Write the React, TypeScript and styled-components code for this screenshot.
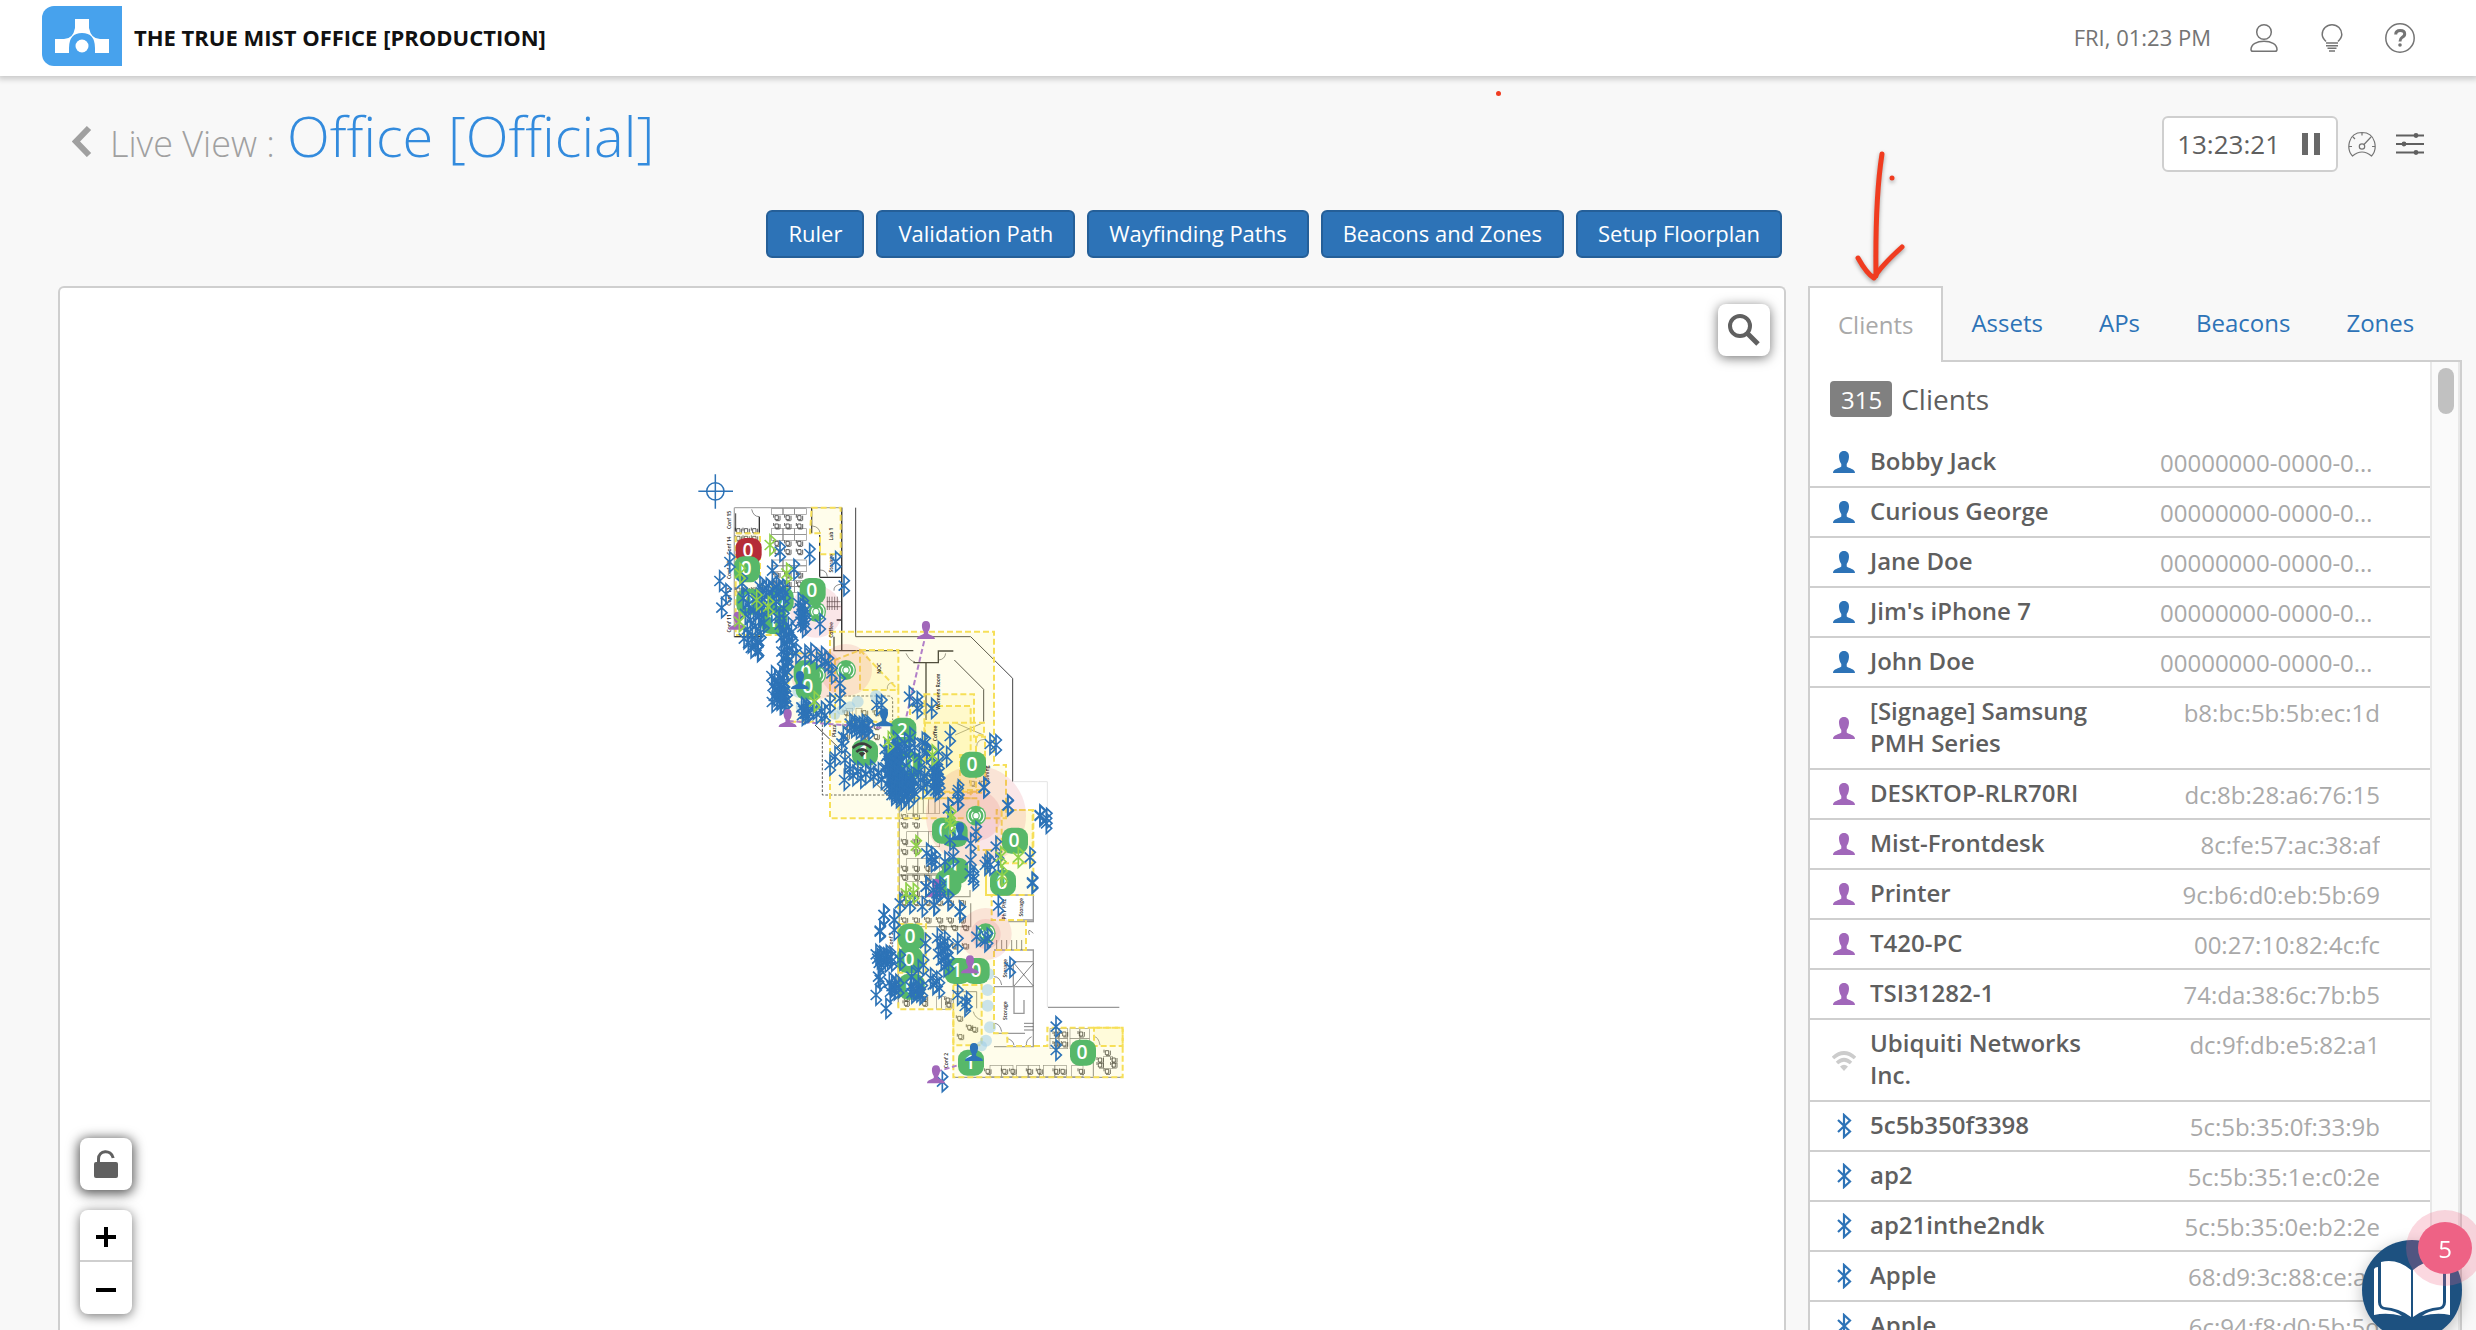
import React, { useState } from "react";
import styled, { createGlobalStyle, css } from "styled-components";

const color = {
  page: "#f8f8f8",
  line: "#cfcfcf",
  blue: "#2d73b7",
  blueDark: "#255f98",
  title: "#338bdd",
  text: "#5f5f5f",
  muted: "#a9a9a9",
  purple: "#a167ba",
  green: "#57b869",
  lime: "#8fd14a",
  red: "#b52c38",
  ink: "#f03c20",
};

const GlobalStyle = createGlobalStyle`
  *, *::before, *::after { box-sizing: border-box; }
  html, body, #root { height: 100%; }
  body {
    margin: 0;
    overflow: hidden;
    background: ${color.page};
    color: ${color.text};
    font-family: "Open Sans", "Noto Sans", sans-serif;
    font-size: 24px;
    line-height: 32px;
  }
  button { font: inherit; color: inherit; border: 0; padding: 0; background: none; cursor: pointer; }
  svg { display: block; }
`;

const Page = styled.div`
  position: relative;
  display: flex;
  flex-direction: column;
  height: 100vh;
  overflow: hidden;
`;

/* ---------- top bar ---------- */

const TopBar = styled.header`
  display: flex;
  align-items: center;
  flex: none;
  height: 76px;
  padding: 0 61px 0 42px;
  background: #fff;
  box-shadow: 0 1px 6px 2px rgba(0, 0, 0, 0.2);
`;

const Logo = styled.div`
  flex: none;
  width: 80px;
  height: 60px;
  margin-bottom: 4px;
  background: #47a2ed;
  border-radius: 12px 0 0 12px;
`;

const OrgName = styled.div`
  margin-left: 12px;
  padding-bottom: 2px;
  color: #111;
  font-size: 22px;
  font-weight: 700;
`;

const TopActions = styled.div`
  display: flex;
  align-items: center;
  gap: 38px;
  margin-left: auto;
  color: #747474;
  font-size: 22px;
`;

const DateText = styled.time`
  padding-bottom: 2px;
`;

const IconButton = styled.button`
  display: grid;
  place-items: center;
  min-width: 30px;
  height: 30px;
  color: #747474;
`;

/* ---------- heading ---------- */

const Heading = styled.div`
  display: flex;
  justify-content: space-between;
  align-items: flex-start;
  flex: none;
  height: 134px;
  padding: 19px 51px 0 72px;
`;

const TitleGroup = styled.div`
  display: flex;
  align-items: baseline;
  font-weight: 300;
  line-height: 80px;
`;

const BackButton = styled.button`
  width: 20px;
  height: 32px;
  margin-right: 18px;
  color: #a0a0a0;
`;

const Crumb = styled.span`
  color: #a0a0a0;
  font-size: 36px;
`;

const Title = styled.h1`
  margin: 0 0 0 12px;
  color: ${color.title};
  font-size: 56px;
  font-weight: 300;
`;

const TimeTools = styled.div`
  display: flex;
  align-items: center;
  gap: 9px;
  padding-top: 21px;
`;

const ViewTools = styled.div`
  display: flex;
  gap: 18px;
`;

const Clock = styled.div`
  display: flex;
  align-items: center;
  gap: 22px;
  height: 56px;
  padding: 0 16px 0 13px;
  border: 2px solid ${color.line};
  border-radius: 6px;
  background: #fff;
  font-size: 26px;
`;

const PauseButton = styled.button`
  display: flex;
  gap: 6px;

  &::before,
  &::after {
    content: "";
    width: 6px;
    height: 22px;
    background: #686868;
  }
`;

/* ---------- work area ---------- */

const WorkArea = styled.main`
  display: grid;
  grid-template-columns: minmax(0, 1fr) 654px;
  gap: 22px;
  flex: 1;
  min-height: 0;
  padding: 0 14px 0 58px;
`;

const MapColumn = styled.section`
  display: flex;
  flex-direction: column;
  min-height: 0;
`;

const Toolbar = styled.div`
  display: flex;
  justify-content: flex-end;
  gap: 12px;
  padding: 0 4px 28px;
`;

const ToolButton = styled.button`
  height: 48px;
  padding: 0 20px 2px;
  border: 2px solid ${color.blueDark};
  border-radius: 6px;
  background: ${color.blue};
  color: #fff;
  font-size: 22px;
  line-height: 30px;
`;

const MapPanel = styled.div`
  position: relative;
  display: flex;
  justify-content: center;
  flex: 1;
  min-height: 0;
  padding-top: 172px;
  overflow: hidden;
  border: 2px solid ${color.line};
  border-bottom: 0;
  border-radius: 6px 6px 0 0;
  background: #fff;
`;

const FloatingControls = styled.div<{ $corner: "top" | "bottom" }>`
  position: absolute;
  display: flex;
  flex-direction: column;
  gap: 20px;
  ${(p) => (p.$corner === "top" ? css`top: 16px; right: 14px;` : css`bottom: 16px; left: 20px;`)}
`;

const MapButton = styled.button<{ $strong?: boolean }>`
  display: grid;
  place-items: center;
  width: 52px;
  height: 52px;
  border-radius: 8px;
  background: #fff;
  color: #606060;
  box-shadow: 0 2px ${(p) => (p.$strong ? "12px 2px rgba(0,0,0,.65)" : "12px rgba(0,0,0,.55)")};
`;

const ZoomGroup = styled.div`
  border-radius: 8px;
  background: #fff;
  box-shadow: 0 2px 12px rgba(0, 0, 0, 0.55);
`;

const ZoomButton = styled.button`
  display: grid;
  place-items: center;
  width: 52px;
  height: 52px;
  padding-top: 4px;
  color: #000;

  &:first-child {
    border-bottom: 2px solid ${color.line};
  }
`;

/* ---------- sidebar ---------- */

const Sidebar = styled.aside`
  position: relative;
  display: flex;
  flex-direction: column;
  min-height: 0;
  padding-top: 76px;
`;

const TabList = styled.div`
  display: flex;
  flex: none;
  height: 76px;
  border-bottom: 2px solid ${color.line};
`;

const Tab = styled.button<{ $active: boolean }>`
  height: 76px;
  padding: 0 28px 2px;
  color: ${color.blue};
  line-height: 32px;
  ${(p) =>
    p.$active &&
    css`
      padding-bottom: 0;
      border: 2px solid ${color.line};
      border-bottom: 0;
      background: #fff;
      color: ${color.muted};
    `}
`;

const TabPanel = styled.div`
  display: flex;
  flex: 1;
  min-height: 0;
  overflow: hidden;
  border: solid ${color.line};
  border-width: 0 2px;
  background: #fff;
`;

const ListArea = styled.div`
  flex: 1;
  min-width: 0;
`;

const Summary = styled.h2`
  display: flex;
  align-items: center;
  gap: 9px;
  height: 76px;
  margin: 0;
  padding: 0 20px 2px;
  font-size: 28px;
  font-weight: 400;
`;

const Count = styled.span`
  padding: 3px 10px 1px 11px;
  border-radius: 4px;
  background: #808080;
  color: #fff;
  font-size: 24px;
`;

const ClientTable = styled.table`
  width: 100%;
  table-layout: fixed;
  border-spacing: 0;
`;

const Cell = styled.td`
  padding: 8px 0;
  border-bottom: 2px solid ${color.line};
  vertical-align: top;
`;

const IconCell = styled(Cell)`
  width: 60px;
  vertical-align: middle;

  svg {
    margin: 0 auto 0 22px;
  }
`;

const NameCell = styled.th`
  width: 250px;
  padding: 7px 0 9px;
  border-bottom: 2px solid ${color.line};
  font-weight: 600;
  text-align: left;
  vertical-align: top;
`;

const MacCell = styled(Cell)`
  padding: 9px 50px 7px 40px;
  color: ${color.muted};
  text-align: right;
`;

const MacText = styled.div`
  overflow: hidden;
  text-overflow: ellipsis;
  white-space: nowrap;
`;

const ScrollTrack = styled.div`
  flex: none;
  width: 30px;
  padding: 6px;
  border: solid #e8e8e8;
  border-width: 0 2px;
  background: #fafafa;
`;

const ScrollThumb = styled.div`
  width: 16px;
  height: 46px;
  border-radius: 8px;
  background: #c1c1c1;
`;

/* ---------- overlays ---------- */

const TabPointer = styled.svg`
  position: absolute;
  top: -61px;
  left: 40px;
  pointer-events: none;
  filter: drop-shadow(0 2px 2px rgba(0, 0, 0, 0.35));
`;

const InkDot = styled.span`
  position: absolute;
  top: 91px;
  left: 60.4%;
  width: 5px;
  height: 5px;
  border-radius: 50%;
  background: ${color.ink};
`;

const GuideButton = styled.button`
  position: fixed;
  right: 14px;
  bottom: -10px;
  width: 100px;
  height: 100px;
  border-radius: 50%;
  background: #1d5180;
  box-shadow: 0 4px 16px rgba(0, 0, 0, 0.25);
`;

const GuideBadge = styled.span`
  position: absolute;
  top: -18px;
  right: -10px;
  width: 54px;
  height: 52px;
  border-radius: 50%;
  background: #ee6285;
  box-shadow: 0 0 0 12px rgba(238, 98, 133, 0.25);
  color: #fff;
  line-height: 54px;
`;

/* ---------- icons ---------- */

const BT_PATH = "M1 6 L13 17.5 L7 23 V1 L13 6.5 L1 18";
const PERSON_PATH =
  "M11 0 C14.500 0 16.200 2.400 16 6 C15.800 9.500 14.700 11.500 13.700 13 V15.500 C16 17.500 22 17.800 22 22 H0 C0 17.800 6 17.500 8.300 15.500 V13 C7.300 11.500 6.200 9.500 6 6 C5.800 2.400 7.500 0 11 0Z";

type Kind = "named" | "wifi" | "guest" | "ble";

function KindIcon({ kind }: { kind: Kind }) {
  if (kind === "ble")
    return (
      <svg width="24" height="26" viewBox="-5 -1 24 26" fill="none" stroke={color.blue} strokeWidth="2.200">
        <path d={BT_PATH} />
      </svg>
    );
  if (kind === "wifi")
    return (
      <svg width="24" height="22" viewBox="0 -1 24 22" fill="none" stroke="#ccc" strokeWidth="3.600">
        <path d="M1 8 Q12 -2 23 8" />
        <path d="M5 13 Q12 6.500 19 13" />
        <path d="M12 21 L8 16.500 Q12 13 16 16.500Z" fill="#ccc" stroke="none" />
      </svg>
    );
  return (
    <svg width="24" height="22" viewBox="-1 0 24 22" fill={kind === "named" ? color.blue : color.purple}>
      <path d={PERSON_PATH} />
    </svg>
  );
}

/* ---------- floor map ---------- */

type Pt = [number, number];

const at = (ox: number, oy: number, pts: Pt[]): Pt[] => pts.map(([x, y]) => [x + ox, y + oy]);
const north = (pts: Pt[]) => at(0, 0, pts);
const centre = (pts: Pt[]) => at(360, 600, pts);
const south = (pts: Pt[]) => at(510, 1260, pts);

const cloud = (x0: number, y0: number, x1: number, y1: number, n: number): Pt[] =>
  Array.from({ length: n }, (_, i) => [
    x0 + ((i * 0.618034) % 1) * (x1 - x0),
    y0 + ((i + 0.5) / n) * (y1 - y0),
  ]);

const beacons: Pt[] = [
  ...north([
    [149, 306], [119, 363], [138, 402], [125, 443], [300, 275], [389, 282], [467, 305], [492, 377], [342, 328],
    [277, 332], [186, 370], [420, 492], [233, 575], [322, 590], [348, 580], [375, 585], [393, 580], [410, 595],
    [425, 590], [445, 610], [455, 640], [480, 670], [480, 715], [435, 605], [450, 730], [590, 735], [605, 735],
    [688, 710], [712, 725], [712, 745], [755, 745], [810, 828], [930, 852], [948, 855], [800, 890], [775, 875],
    [490, 830], [485, 850], [465, 890], [450, 915], [495, 900], [493, 960], [735, 850], [740, 880],
    [833, 1000], [835, 1020], [805, 1045], [912, 982], [983, 1035], [1080, 1065], [1100, 1075],
  ]),
  ...cloud(190, 410, 255, 550, 15), ...cloud(240, 378, 320, 400, 9), ...cloud(230, 410, 325, 480, 7),
  ...cloud(300, 490, 340, 560, 9), ...cloud(355, 425, 378, 505, 10), ...cloud(205, 545, 240, 575, 4),
  ...cloud(305, 570, 328, 650, 8), ...cloud(275, 645, 315, 735, 15), ...cloud(302, 700, 324, 735, 6),
  ...cloud(365, 740, 388, 768, 6), ...cloud(400, 745, 440, 770, 4), ...cloud(510, 790, 570, 812, 10),
  ...cloud(510, 925, 610, 960, 9), ...cloud(615, 865, 665, 950, 20),
  ...cloud(640, 840, 695, 890, 7), ...cloud(625, 940, 705, 1000, 22), ...cloud(630, 985, 690, 1022, 10),
  ...cloud(715, 930, 745, 990, 5), ...cloud(757, 920, 780, 995, 13), ...cloud(690, 825, 750, 900, 5),
  ...centre([
    [445, 445], [475, 390], [474, 420], [552, 383], [624, 437], [720, 468], [739, 490], [528, 515], [588, 560],
    [690, 592], [697, 667], [595, 610], [562, 605], [570, 615], [555, 615], [395, 590], [380, 580], [405, 600],
    [395, 605], [435, 605], [450, 540], [460, 590], [512, 550], [512, 600], [520, 650], [510, 640], [378, 680],
    [420, 690], [410, 700], [445, 720], [403, 735], [367, 740], [300, 730], [330, 730], [480, 755], [595, 737],
    [252, 765], [283, 780], [240, 812],
  ]),
  ...south([
    [547, 10], [370, 0], [228, 20], [250, 30], [270, 20], [295, 60], [330, 95], [252, 75], [101, 105], [133, 120],
    [90, 155], [133, 150], [380, 170], [405, 185], [412, 175], [323, 190], [480, 262], [226, 190], [85, 290],
    [90, 300], [78, 345], [108, 385], [150, 240], [185, 290], [205, 270], [220, 255], [323, 345], [350, 365],
    [345, 378], [618, 440], [618, 510], [277, 605],
  ]),
  ...south(cloud(78, 222, 128, 250, 11)), ...south(cloud(118, 305, 150, 338, 6)),
  ...south(cloud(182, 318, 222, 345, 7)), ...south(cloud(262, 170, 298, 265, 10)),
  ...south(cloud(242, 290, 272, 328, 4)),
];

const limeBeacons: Pt[] = [
  ...north([[270, 255], [320, 340], [180, 340], [230, 420], [265, 440], [178, 485], [403, 725], [757, 885], [625, 845]]),
  ...centre([[348, 557], [452, 470], [602, 590], [655, 592], [606, 648], [318, 700], [340, 700], [450, 490]]),
];

const apMarkers: [number, number, string][] = [
  [201, 328, "0"], [208, 425, "0"], [302, 420, "0"], [398, 393, "0"], [282, 483, "1"], [380, 640, "0"],
  [386, 680, "0"], [670, 812, "2"], [555, 878, "1"], [688, 915, "0"], [879, 914, "0"], [1005, 1142, "0"],
  [969, 1268, "0"], [795, 1112, "0"], [824, 1122, "0"], [826, 1232, "1"], [805, 1268, "1"], [693, 1430, "0"],
  [690, 1500, "0"], [695, 1580, "0"], [833, 1533, "1"], [890, 1533, "0"], [873, 1808, "1"], [1209, 1778, "0"],
];

const rings: Pt[] = [[408, 455], [408, 645], [498, 630], [888, 1067], [917, 1420]];

const halos: [number, number, number][] = [
  [408, 455, 78], [498, 630, 78], [410, 640, 78], [888, 1067, 150], [888, 1067, 76], [917, 1422, 78], [917, 1422, 45],
];

const trail: [number, number, number][] = [
  [355, 695, 18], [365, 740, 18], [533, 725, 18], [588, 708, 18], [510, 740, 16], [485, 750, 15], [465, 765, 15],
  [690, 865, 18], [700, 890, 16], [755, 990, 20], [925, 1542, 18], [923, 1590, 18], [923, 1637, 18],
  [930, 1702, 18], [918, 1742, 18], [905, 1758, 16],
];

const zones = [
  "395,143 482,143 482,283 420,283 420,220 390,220",
  "167,220 240,220 240,525 167,525",
  "240,380 320,380 320,525 240,525",
  "325,580 450,580 450,785 325,785",
  "450,515 942,515 942,915 978,915 978,1075 450,1075",
  "540,570 655,570 655,690 540,690",
  "465,600 540,570 655,690 655,785 465,785",
  "733,703 882,703 882,830 915,830 915,998 733,998",
  "690,738 872,738 872,1015 690,1015",
  "735,788 912,788 912,826 888,826 888,995 735,995",
  "840,885 915,885 915,990 840,990",
  "658,1015 895,1015 895,1170 918,1170 918,1305 1060,1305 1060,1050 950,1050 950,1170 918,1170 918,1305 935,1305 935,1380 1038,1380 1038,1470 942,1470 942,1720 982,1720 982,1758 1102,1758 1102,1703 1328,1703 1328,1852 820,1852 820,1648 655,1648 655,1015",
  "965,1050 1058,1050 1058,1210 965,1210",
  "655,1392 738,1392 738,1538 655,1538",
  "820,1575 905,1575 905,1756 820,1756",
  "1242,1703 1328,1703 1328,1758 1242,1758",
];

const walls: { d: string; c: string; w: number; dash?: string }[] = [
  { d: "M163 143H485V572M163 143V530H240", c: "#aaa", w: 4 },
  { d: "M485 143V572M163 530H250M460 572H700M462 530V572H485M238 170V220M419 225V350M419 352H485M395 143V220M470 480H485M738 608V780M700 608H775V573H820", c: "#333", w: 4 },
  { d: "M527 143V530H872L998 655V965M823 600L911 688V785M405 795L660 1040M167 160V215", c: "#444", w: 3 },
  { d: "M427 780V1005H655M440 708H625Q638 708 638 722V780", c: "#555", w: 3, dash: "8 5" },
  { d: "M998 965H1102V1642", c: "#e4e4e4", w: 3 },
  { d: "M1104 1642H1318M658 1015V1400M655 1400V1640M658 1075H740M658 1245H872M658 1310H870V1290M658 1400H872V1330M940 1305H1060V1385H985M1022 1380H1060M942 1470H1060V1760H942M942 1580H1060M1000 1505H1060V1580M1000 1505V1580M1002 1580V1660H1032V1620M942 1720H1035M820 1852H1328", c: "#999", w: 4 },
  { d: "M442 410V450M448 410V450M456 410V450M464 410V450M472 410V450M440 425H482M440 440H482M1002 1510L1060 1578M1060 1510L1002 1578M825 788L910 825M910 788L825 825M658 1015H820M700 1015V1070M730 1015V1060M765 1015V1060M820 1595H890V1645M820 1595V1652M1240 1760V1850M950 1440V1470M965 1440V1470M980 1440V1470M995 1440V1470M1010 1440V1470M1025 1440V1470M1032 1690H1060M1032 1700H1060M1032 1710H1060", c: "#444", w: 2 },
  { d: "M215 148Q220 170 238 170M420 220Q418 200 397 198M442 350Q440 330 420 330M462 392Q460 375 485 372M678 580Q690 605 705 605M797 580Q795 598 776 600M640 668Q620 668 622 688M890 860Q890 840 912 838M1048 1425Q1040 1400 1060 1420M942 1550Q960 1550 965 1575M942 1690Q960 1690 965 1715M1040 1760Q1035 1740 1055 1730M980 1735Q1000 1740 1002 1756M880 1655Q885 1675 905 1680M1242 1730Q1255 1730 1260 1755", c: "#555", w: 2 },
];

const grid = (xs: number[], ys: number[]): Pt[] => ys.flatMap((y) => xs.map((x): Pt => [x, y]));

const chairs: Pt[] = [
  ...grid([292, 325, 360], [173, 198, 250, 275, 345, 372]),
  ...grid([177, 200, 225], [212, 235, 390]),
  ...grid([500, 555, 590], [758, 800, 830]),
  ...grid([675, 710], [1070, 1095, 1145, 1175, 1225, 1252, 1300]),
  ...grid([745, 795, 830], [1225, 1252]),
  ...grid([675, 710, 745, 780, 812, 848], [1328, 1380]),
  ...grid([790, 825, 858], [1403, 1458]), ...grid([680, 735], [1630, 1615]),
  [840, 1675], [870, 1702], [843, 1730], [885, 1708], [805, 1620], [808, 1635],
  ...grid([925, 975, 1000, 1050, 1080, 1130, 1150, 1205], [1834]), ...grid([1130, 1155, 1205], [1722, 1752]),
  ...grid([1262, 1303], [1800, 1815]), ...grid([1283], [1778, 1834]), ...grid([880, 910], [925, 970]),
];

const desks: [number, number, number, number][] = [
  ...grid([274, 307, 343], [146, 206, 224, 300, 318, 362, 380]).map(([x, y]): [number, number, number, number] => [x, y, 36, 17]),
  ...grid([680, 712, 745], [1015, 1115, 1195, 1265]).map(([x, y]): [number, number, number, number] => [x, y, 34, 45]),
  ...grid([930, 965, 1010, 1045, 1090, 1125, 1175], [1816]).map(([x, y]): [number, number, number, number] => [x, y, 34, 34]),
  ...grid([1110, 1135, 1170, 1200], [1706, 1736]).map(([x, y]): [number, number, number, number] => [x, y, 28, 30]),
  [770, 1610, 14, 38], [784, 1610, 14, 38], [500, 745, 18, 40], [528, 745, 18, 60], [1270, 1790, 28, 35],
];

const rooms: [number, number, string][] = [
  [152, 180, "Conf 15"], [152, 257, "Conf 14"], [152, 330, "Conf 13"], [152, 410, "Conf 12"], [152, 490, "Conf 11"],
  [458, 222, "Lab 1"], [458, 310, "Storage"], [458, 510, "Coffee"], [602, 625, "NOC"], [781, 695, "Womens Room"],
  [468, 812, "Plaza"], [770, 820, "Coffee"], [928, 940, "Dining"], [1030, 1342, "Storage"], [978, 1330, "Ph2"],
  [978, 1365, "Ph1"], [980, 1525, "Storage"], [980, 1652, "Storage"], [640, 1440, "Conf 3"], [805, 1802, "Conf 2"],
];

const MapText = styled.text`
  font-family: "Open Sans", sans-serif;
  font-weight: 600;
  text-anchor: middle;
`;

function Person({ x, y, fill }: { x: number; y: number; fill: string }) {
  return <path d={PERSON_PATH} fill={fill} transform={`translate(${x - 27} ${y - 27}) scale(2.450)`} />;
}

function FloorMap() {
  return (
    <svg width="460" height="650" viewBox="36 0 1380 1950" role="img" aria-label="Office floor plan with live devices">
      <g fill="none">
        {walls.map((w, i) => (
          <path key={i} d={w.d} stroke={w.c} strokeWidth={w.w} strokeDasharray={w.dash} />
        ))}
        {desks.map(([x, y, w, h], i) => (
          <rect key={i} x={x} y={y} width={w} height={h} stroke="#888" strokeWidth="2" />
        ))}
        {chairs.map(([x, y], i) => (
          <path
            key={i}
            d={`M${x - 7} ${y - 6}h10v12h-10zM${x - 11} ${y - 9}v9M${x + 8} ${y - 6}v14M${x - 5} ${y + 9}h12`}
            stroke="#222"
            strokeWidth="2.200"
          />
        ))}
      </g>
      <g fill="#fff27a" fillOpacity="0.15" stroke="#f6df58" strokeWidth="6" strokeDasharray="18 9">
        {zones.map((z) => (
          <polygon key={z} points={z} />
        ))}
      </g>
      {rooms.map(([x, y, name]) => (
        <MapText key={`${x}-${y}`} fontSize="15" fill="#222" transform={`translate(${x} ${y}) rotate(-90)`}>
          {name}
        </MapText>
      ))}
      {halos.map(([x, y, r], i) => (
        <circle key={i} cx={x} cy={y} r={r} fill="#dc4b5a" fillOpacity="0.14" />
      ))}
      {trail.map(([x, y, r], i) => (
        <circle key={i} cx={x} cy={y} r={r} fill="#9fcde8" fillOpacity="0.55" />
      ))}
      <path
        d="M738 520L672 800M325 783L610 804M770 1835L830 1817"
        stroke="#b27fc8"
        strokeWidth="6"
        strokeDasharray="16 8"
        fill="none"
      />
      {rings.map(([x, y]) => (
        <g key={`${x}-${y}`} fill="none" stroke="#fff" strokeWidth="3.500">
          <circle cx={x} cy={y} r="30" fill={color.green} stroke="none" />
          <circle cx={x} cy={y} r="6" fill="#fff" />
          <path d={`M${x - 8} ${y - 11}a14 14 0 0 0 0 22M${x + 8} ${y - 11}a14 14 0 0 1 0 22`} />
          <path d={`M${x - 14} ${y - 19}a23 23 0 0 0 0 38M${x + 14} ${y - 19}a23 23 0 0 1 0 38`} />
        </g>
      ))}
      <rect x="167" y="234" width="78" height="78" rx="28" fill={color.red} />
      <MapText x="204" y="291" fontSize="58" fill="#fff">0</MapText>
      {apMarkers.map(([x, y, n]) => (
        <g key={`${x}-${y}`}>
          <rect x={x - 39} y={y - 39} width="78" height="78" rx="28" fill={color.green} />
          <MapText x={x - 3} y={y + 18} fontSize="58" fill="#fff">{n}</MapText>
        </g>
      ))}
      <Person x={173} y={482} fill={color.purple} />
      <Person x={768} y={1283} fill={color.purple} />
      <g fill="none" stroke={color.blue} strokeWidth="5">
        {beacons.map(([x, y], i) => (
          <path key={i} d={`M${x - 16} ${y - 15}l32 30l-16 15v-60l16 15l-32 30`} />
        ))}
      </g>
      <g fill="none" stroke={color.lime} strokeWidth="5">
        {limeBeacons.map(([x, y], i) => (
          <path key={i} d={`M${x - 16} ${y - 15}l32 30l-16 15v-60l16 15l-32 30`} />
        ))}
      </g>
      <Person x={738} y={510} fill={color.purple} />
      <Person x={323} y={774} fill={color.purple} />
      <Person x={870} y={1513} fill={color.purple} />
      <Person x={768} y={1843} fill={color.purple} />
      <Person x={360} y={660} fill={color.blue} />
      <Person x={612} y={772} fill={color.blue} />
      <Person x={840} y={1114} fill={color.blue} />
      <Person x={882} y={1776} fill={color.blue} />
      <g fill="none" stroke="#3d3d3d" strokeWidth="8">
        <path d="M518 864Q546 838 574 864" />
        <path d="M529 876Q546 860 563 876" />
        <path d="M546 891L536 880Q546 872 556 880Z" fill="#3d3d3d" stroke="none" />
      </g>
      <g fill="none" stroke={color.blue} strokeWidth="4.500">
        <circle cx="106" cy="94" r="26" />
        <path d="M106 43V146M55 94H159" />
      </g>
    </svg>
  );
}

/* ---------- data ---------- */

const tools = ["Ruler", "Validation Path", "Wayfinding Paths", "Beacons and Zones", "Setup Floorplan"];
const tabs = ["Clients", "Assets", "APs", "Beacons", "Zones"];
const anonymous = "00000000-0000-0000-0000-000000000000";

const clients: [Kind, string, string][] = [
  ["named", "Bobby Jack", anonymous],
  ["named", "Curious George", anonymous],
  ["named", "Jane Doe", anonymous],
  ["named", "Jim's iPhone 7", anonymous],
  ["named", "John Doe", anonymous],
  ["guest", "[Signage] Samsung PMH Series", "b8:bc:5b:5b:ec:1d"],
  ["guest", "DESKTOP-RLR70RI", "dc:8b:28:a6:76:15"],
  ["guest", "Mist-Frontdesk", "8c:fe:57:ac:38:af"],
  ["guest", "Printer", "9c:b6:d0:eb:5b:69"],
  ["guest", "T420-PC", "00:27:10:82:4c:fc"],
  ["guest", "TSI31282-1", "74:da:38:6c:7b:b5"],
  ["wifi", "Ubiquiti Networks Inc.", "dc:9f:db:e5:82:a1"],
  ["ble", "5c5b350f3398", "5c:5b:35:0f:33:9b"],
  ["ble", "ap2", "5c:5b:35:1e:c0:2e"],
  ["ble", "ap21inthe2ndk", "5c:5b:35:0e:b2:2e"],
  ["ble", "Apple", "68:d9:3c:88:ce:a4"],
  ["ble", "Apple", "6c:94:f8:d0:5b:5d"],
];

export default function App() {
  const [tab, setTab] = useState("Clients");
  return (
    <Page>
      <GlobalStyle />
      <TopBar>
        <Logo>
          <svg width="80" height="60" viewBox="0 0 80 60" fill="#fff">
            <path d="M33 13H47V22Q49 33 58 33H67V47H53V42Q53 27 40 27Q27 27 27 42V47H13V33H22Q31 33 33 22Z" />
            <circle cx="40" cy="40" r="6.500" />
          </svg>
        </Logo>
        <OrgName>THE TRUE MIST OFFICE [PRODUCTION]</OrgName>
        <TopActions>
          <DateText>FRI, 01:23 PM</DateText>
          <IconButton aria-label="Account">
            <svg width="30" height="30" viewBox="0 0 30 30" fill="none" stroke="currentColor" strokeWidth="1.500">
              <circle cx="15" cy="9" r="7.300" />
              <path d="M2 26.500C2 21 8 18.200 15 18.200S28 21 28 26.500Q28 28.300 26 28.300H4Q2 28.300 2 26.500Z" />
            </svg>
          </IconButton>
          <IconButton aria-label="Tips">
            <svg width="30" height="30" viewBox="0 0 30 30" fill="none" stroke="currentColor" strokeWidth="1.500">
              <path d="M9 18.500C6.500 16 5.200 14.500 5.200 11.500C5.200 6 9.500 1.700 15 1.700S24.800 6 24.800 11.500C24.800 14.500 23.500 16 21 18.500" />
              <path d="M9 20H21M9 22.700H21M10.500 25.300H19.500M12 28H18" />
            </svg>
          </IconButton>
          <IconButton aria-label="Help">
            <svg width="30" height="30" viewBox="0 0 30 30" fill="none" stroke="currentColor">
              <circle cx="15" cy="15" r="14.200" strokeWidth="1.500" />
              <path d="M10.700 11.500Q10.700 7.500 15.300 7.500Q19.700 7.500 19.700 11Q19.700 13 17 14.500Q15 15.700 15 18.500" strokeWidth="3" />
              <circle cx="15" cy="22" r="1.800" fill="currentColor" stroke="none" />
            </svg>
          </IconButton>
        </TopActions>
      </TopBar>

      <Heading>
        <TitleGroup>
          <BackButton aria-label="Back">
            <svg width="20" height="32" viewBox="0 0 20 32" fill="none" stroke="currentColor" strokeWidth="6">
              <path d="M17 3L4 16.500L17 30" />
            </svg>
          </BackButton>
          <Crumb>Live View :</Crumb>
          <Title>Office [Official]</Title>
        </TitleGroup>
        <TimeTools>
          <Clock>
            <time>13:23:21</time>
            <PauseButton aria-label="Pause" />
          </Clock>
          <ViewTools>
            <IconButton aria-label="Performance">
              <svg width="28" height="26" viewBox="0 0 28 26" fill="none" stroke="currentColor" strokeWidth="1.200">
                <path d="M4.500 25C-2 18 0 1.500 14 1.500S30 18 23.500 25Q14 17 4.500 25ZM14 1.500V4.500M5 6L7 8M23 6L16 13.500M1 15.500H4M24 15.500H27" />
                <circle cx="14" cy="15.500" r="2.700" />
              </svg>
            </IconButton>
            <IconButton aria-label="Display settings">
              <svg width="28" height="24" viewBox="0 0 28 24" stroke="#606060" strokeWidth="1.800" fill="#606060">
                <path d="M0 3.500H28M0 12H28M0 20.500H28" />
                <circle cx="20" cy="3.500" r="1.500" />
                <circle cx="8" cy="12" r="1.500" />
                <circle cx="20" cy="20.500" r="1.500" />
              </svg>
            </IconButton>
          </ViewTools>
        </TimeTools>
      </Heading>

      <WorkArea>
        <MapColumn>
          <Toolbar>
            {tools.map((t) => (
              <ToolButton key={t}>{t}</ToolButton>
            ))}
          </Toolbar>
          <MapPanel>
            <FloorMap />
            <FloatingControls $corner="top">
              <MapButton aria-label="Search map">
                <svg width="32" height="32" viewBox="0 0 32 32" fill="none" stroke="currentColor" strokeWidth="4">
                  <circle cx="12" cy="12" r="10" />
                  <path d="M19 19L30 30" strokeWidth="5" />
                </svg>
              </MapButton>
            </FloatingControls>
            <FloatingControls $corner="bottom">
              <MapButton $strong aria-label="Unlock map">
                <svg width="24" height="28" viewBox="0 0 24 28">
                  <rect y="12" width="24" height="16" rx="2" fill="currentColor" />
                  <path d="M4.500 13V9C4.500 0 17 -1 19.200 8" fill="none" stroke="currentColor" strokeWidth="3" />
                </svg>
              </MapButton>
              <ZoomGroup>
                <ZoomButton aria-label="Zoom in">
                  <svg width="20" height="20" viewBox="0 0 20 20" stroke="currentColor" strokeWidth="4">
                    <path d="M0 10H20M10 0V20" />
                  </svg>
                </ZoomButton>
                <ZoomButton aria-label="Zoom out">
                  <svg width="20" height="20" viewBox="0 0 20 20" stroke="currentColor" strokeWidth="4">
                    <path d="M0 10H20" />
                  </svg>
                </ZoomButton>
              </ZoomGroup>
            </FloatingControls>
          </MapPanel>
        </MapColumn>

        <Sidebar>
          <TabPointer width="64" height="136" viewBox="0 0 64 136" fill="none" stroke={color.ink} strokeLinecap="round" strokeLinejoin="round">
            <path d="M34 5Q27 50 28 127" strokeWidth="5" />
            <path d="M10 109Q19 125 26 129Q32 118 54 98" strokeWidth="5" />
            <circle cx="44" cy="29" r="2.500" fill={color.ink} stroke="none" />
          </TabPointer>
          <TabList role="tablist">
            {tabs.map((t) => (
              <Tab key={t} role="tab" aria-selected={t === tab} $active={t === tab} onClick={() => setTab(t)}>
                {t}
              </Tab>
            ))}
          </TabList>
          <TabPanel role="tabpanel">
            <ListArea>
              <Summary>
                <Count>315</Count>
                Clients
              </Summary>
              <ClientTable>
                <tbody>
                  {clients.map(([kind, name, mac], i) => (
                    <tr key={i}>
                      <IconCell>
                        <KindIcon kind={kind} />
                      </IconCell>
                      <NameCell scope="row">{name}</NameCell>
                      <MacCell>
                        <MacText>{mac}</MacText>
                      </MacCell>
                    </tr>
                  ))}
                </tbody>
              </ClientTable>
            </ListArea>
            <ScrollTrack>
              <ScrollThumb />
            </ScrollTrack>
          </TabPanel>
        </Sidebar>
      </WorkArea>

      <InkDot />
      <GuideButton aria-label="Guides, 5 new">
        <svg width="100" height="100" viewBox="0 0 100 100" fill="#fff">
          <path d="M19 22Q35 18 49 30V77Q37 68 22 67Q19 66 19 62Z" />
          <path d="M81 22Q65 18 51 30V77Q63 68 78 67Q81 66 81 62Z" />
          <path d="M16 27V62Q16 69 24 70Q34 71 40 76Q25 72 12 75V29Q13 27 16 27Z" />
          <path d="M84 27V62Q84 69 76 70Q66 71 60 76Q75 72 88 75V29Q87 27 84 27Z" />
        </svg>
        <GuideBadge>5</GuideBadge>
      </GuideButton>
    </Page>
  );
}
